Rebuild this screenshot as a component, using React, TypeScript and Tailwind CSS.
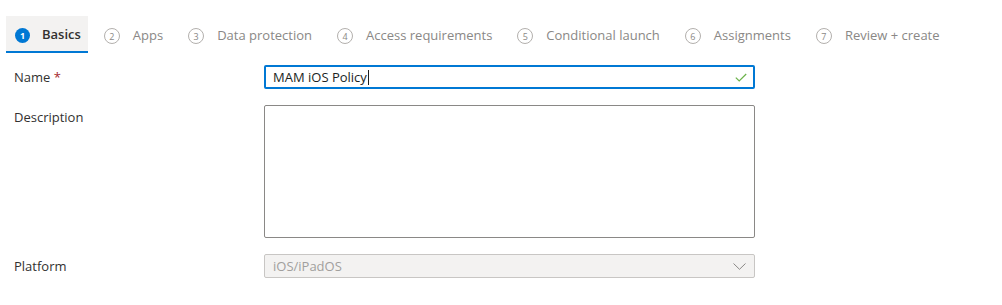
import React from "react";

const steps = [
  "Basics",
  "Apps",
  "Data protection",
  "Access requirements",
  "Conditional launch",
  "Assignments",
  "Review + create",
];

export default function App() {
  return (
    <div
      className="w-[1002px] h-[305px] bg-white text-[#323130] pt-[16px]"
      style={{ fontFamily: '"Open Sans", "Noto Sans", sans-serif' }}
    >
      <div className="flex items-stretch pl-[6px] gap-[7px] h-[37px]">
        {steps.map((s, i) => {
          const active = i === 0;
          return (
            <div
              key={s}
              className={
                active
                  ? "flex items-center gap-[12px] pl-[9px] pr-[7px] bg-[#f3f2f1] border-b-2 border-[#0078d4] pt-[3px]"
                  : "flex items-center gap-[13px] px-[9px] pt-[3px]"
              }
            >
              {active ? (
                <span className="w-[15px] h-[15px] rounded-full bg-[#0078d4] text-white text-[9px] font-bold flex items-center justify-center leading-none">
                  1
                </span>
              ) : (
                <span className="w-[16px] h-[16px] rounded-full border border-[#b3b0ad] text-[#8a8886] text-[9px] flex items-center justify-center leading-none">
                  {i + 1}
                </span>
              )}
              <span
                className={
                  active
                    ? "text-[13px] font-semibold text-[#323130]"
                    : "text-[13px] text-[#8a8886]"
                }
              >
                {s}
              </span>
            </div>
          );
        })}
      </div>

      <div className="pl-[14px] pt-[12px] flex flex-col gap-[16px]">
        <div className="flex items-start">
          <div className="w-[250px] text-[13px] leading-[24px]">
            Name <span className="text-[#a4262c]">*</span>
          </div>
          <div className="w-[491px] h-[24px] border-2 border-[#0078d4] rounded-[2px] flex items-center pl-[7px] pr-[6px]">
            <span className="text-[13px] text-[#201f1e] leading-none">MAM iOS Policy</span>
            <span className="w-px h-[15px] bg-[#201f1e] ml-px" />
            <span className="flex-1" />
            <svg width="12" height="9" viewBox="0 0 12 9" fill="none">
              <path d="M0.8 4.6 L4.2 8 L11.2 1" stroke="#6bb24a" strokeWidth="1.2" />
            </svg>
          </div>
        </div>

        <div className="flex items-start">
          <div className="w-[250px] text-[13px] leading-[24px]">Description</div>
          <div className="w-[491px] h-[133px] border border-[#8a8886] rounded-[2px]" />
        </div>

        <div className="flex items-start">
          <div className="w-[250px] text-[13px] leading-[24px]">Platform</div>
          <div className="w-[491px] h-[24px] border border-[#c8c6c4] bg-[#f3f2f1] rounded-[2px] flex items-center pl-[8px] pr-[8px]">
            <span className="text-[13px] text-[#a19f9d] leading-none">iOS/iPadOS</span>
            <span className="flex-1" />
            <svg width="13" height="7" viewBox="0 0 13 7" fill="none">
              <path d="M0.5 0.5 L6.5 6.3 L12.5 0.5" stroke="#8a8886" strokeWidth="1" />
            </svg>
          </div>
        </div>
      </div>
    </div>
  );
}
